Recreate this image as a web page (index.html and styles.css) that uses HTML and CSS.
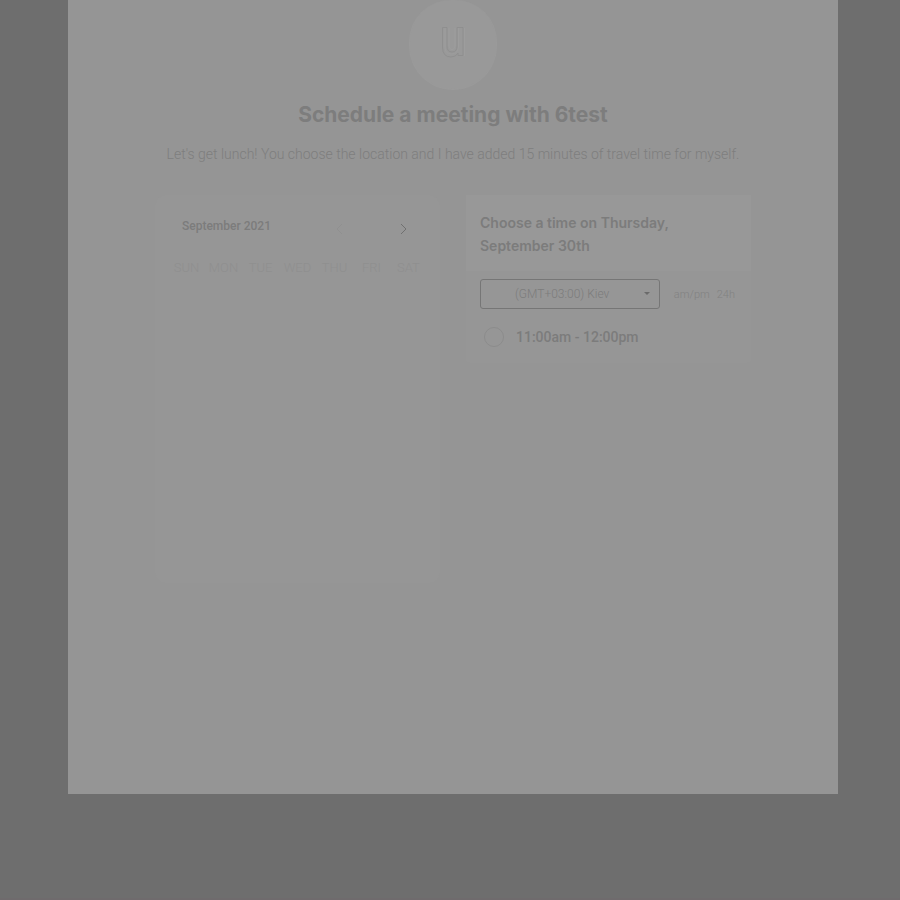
FILE: index.html
```
<!DOCTYPE html>
<html lang="en">
<head>
<meta charset="utf-8">
<meta name="viewport" content="width=device-width, initial-scale=1">
<title>Schedule a meeting</title>
<link rel="stylesheet" href="styles.css">
</head>
<body>
<main class="page">
  <header class="intro">
    <div class="avatar">
      <svg width="26" height="34" viewBox="0 0 26 34" fill="none" aria-hidden="true">
        <path class="logo-edge" d="M2.500 2.500H7V21q0 6 5 6t5-6V2.500h6v28h-5V28q-2 4-7 4-8.500 0-8.500-10Z"/>
        <path class="logo-line" d="M5 3v19q0 7 6.500 7t7-7V3M24.500 3v28M9 3v18q0 3.500 3 3.500t3-3.500V3"/>
      </svg>
    </div>
    <h1 class="title">Schedule a meeting with 6test</h1>
    <p class="lead">Let's get lunch! You choose the location and I have added 15 minutes of travel time for myself.</p>
  </header>
  <div class="columns">
    <section class="calendar">
      <div class="calendar-head">
        <h2 class="month">September 2021</h2>
        <div class="arrows">
          <button class="arrow arrow-off" type="button" aria-label="Previous month" disabled><svg width="8" height="12" viewBox="0 0 8 12" fill="none"><path d="M6 1L1 6l5 5"/></svg></button>
          <button class="arrow" type="button" aria-label="Next month"><svg width="8" height="12" viewBox="0 0 8 12" fill="none"><path d="M1 1l5 5-5 5"/></svg></button>
        </div>
      </div>
      <table class="days">
        <thead><tr><th>SUN</th><th>MON</th><th>TUE</th><th>WED</th><th>THU</th><th>FRI</th><th>SAT</th></tr></thead>
      </table>
    </section>
    <section class="times">
      <h2 class="times-title">Choose a time on Thursday, September 30th</h2>
      <div class="times-body">
        <div class="zone-row">
          <div class="zone">
            <select class="zone-select" aria-label="Time zone"><option>(GMT+03:00) Kiev</option></select>
            <svg class="caret" width="6" height="3" viewBox="0 0 6 3" aria-hidden="true"><path d="M0 0h6L3 3z"/></svg>
          </div>
          <div class="formats">
            <button class="format" type="button">am/pm</button>
            <button class="format" type="button">24h</button>
          </div>
        </div>
        <label class="slot"><input class="slot-radio" type="radio" name="slot">11:00am - 12:00pm</label>
      </div>
    </section>
  </div>
</main>
</body>
</html>
```
FILE: styles.css
```
* { box-sizing: border-box; }
html { min-height: 100%; background: #6e6e6e; }
body {
  margin: 0;
  min-height: 100vh;
  padding: 0 62px 104px 68px;
  border-bottom: 2px solid #6f6b6d;
  font-family: Roboto, sans-serif;
  color: #808080;
  display: flex;
}
.page { flex: 1; background: #959595; }
.intro { text-align: center; }
.avatar {
  width: 88px;
  height: 90px;
  margin: 0 auto;
  padding-bottom: 6px;
  border: 1px solid #9a9a9a;
  border-top: 0;
  border-radius: 42px 42px 44px 44px;
  background: #999999;
  display: flex;
  align-items: center;
  justify-content: center;
}
.logo-edge { stroke: #8f8f8f; }
.logo-line { stroke: #9d9d9d; }
.title {
  margin: 9px 0 0;
  font: 700 21px/32px Inter, sans-serif;
  color: #7d7d7d;
}
.lead {
  margin: 13px 0 0;
  font-size: 14px;
  line-height: 20px;
  font-weight: 300;
  color: #7e7e7e;
}
.columns {
  display: grid;
  grid-template-columns: 1fr 1fr;
  gap: 26px;
  align-items: start;
  padding: 31px 87px 0 87px;
}
.calendar {
  min-height: 388px;
  padding: 20px 12px;
  border: 1px solid #969696;
  border-radius: 10px;
  background: #969696;
}
.calendar-head {
  display: flex;
  justify-content: space-between;
  padding: 0 18px 0 14px;
}
.month {
  margin: 0;
  font-size: 12px;
  line-height: 20px;
  font-weight: 500;
  color: #7c7c7c;
}
.arrows { display: flex; gap: 54px; padding-top: 6px; }
.arrow {
  width: 10px;
  height: 14px;
  padding: 0;
  border: 0;
  background: none;
  stroke: #707070;
}
.arrow svg { display: block; margin: auto; }
.arrow-off { stroke: #909090; }
.days {
  width: 100%;
  margin-top: 22px;
  border-collapse: collapse;
  table-layout: fixed;
}
.days th {
  padding: 0;
  font-size: 13px;
  line-height: 20px;
  font-weight: 300;
  color: #8f8f8f;
}
.times { background: #969696; border-radius: 4px; }
.times-title {
  margin: 0;
  padding: 16px 14px 14px;
  font: 600 14px/23px Inter, sans-serif;
  color: #7c7c7c;
  background: #989898;
}
.times-body { padding: 8px 16px 16px 14px; }
.zone-row { display: flex; align-items: center; gap: 14px; }
.zone { position: relative; flex: 1; }
.zone-select {
  display: block;
  appearance: none;
  width: 100%;
  height: 30px;
  padding: 0 20px 0 34px;
  border: 1px solid #767676;
  border-radius: 3px;
  background: transparent;
  font: 300 12px Roboto, sans-serif;
  color: #7c7c7c;
}
.caret { position: absolute; right: 10px; top: 13px; fill: #6a6a6a; }
.formats { display: flex; gap: 7px; }
.format {
  padding: 0;
  border: 0;
  background: none;
  font: 300 11px Roboto, sans-serif;
  color: #828282;
}
.slot {
  display: flex;
  align-items: center;
  gap: 12px;
  margin-top: 18px;
  padding-left: 4px;
  font: 500 14px/20px Roboto, sans-serif;
  color: #7c7c7c;
}
.slot-radio {
  appearance: none;
  width: 20px;
  height: 20px;
  margin: 0;
  border: 1px solid #8c8c8c;
  border-radius: 50%;
}
```
